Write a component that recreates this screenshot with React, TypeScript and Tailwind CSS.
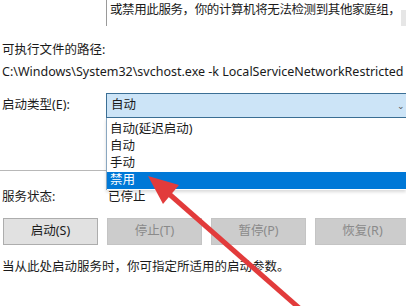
const FONT = "font-['Segoe_UI','Noto_Sans','Noto_Sans_CJK_SC',sans-serif]";

const OPTIONS = ['自动(延迟启动)', '自动', '手动', '禁用'];

function ActionButton({ label, disabled }: { label: string; disabled?: boolean }) {
  return (
    <div
      className={`w-[95px] h-[27px] shrink-0 flex items-center justify-center border text-[12.5px] ${
        disabled ? 'bg-[#cccccc] border-[#c4c4c4] text-[#8a8a8a]' : 'bg-[#e1e1e1] border-[#adadad] text-[#1a1a1a]'
      }`}
    >
      {label}
    </div>
  );
}

export default function App() {
  return (
    <div className={`relative w-[406px] h-[306px] overflow-hidden bg-white text-[#1a1a1a] ${FONT}`}>
      {/* 설명 텍스트 박스 */}
      <div className="flex h-[26px]">
        <div className="w-[106px] shrink-0" />
        <div className="flex-1 min-w-0 flex border-l border-[#9a9a9a]">
          <div className="flex-1 min-w-0 pl-[3px] pt-[1px] text-[12.5px] leading-[17px] tracking-[-0.4px] whitespace-nowrap">
            或禁用此服务，你的计算机将无法检测到其他家庭组，
          </div>
          <div className="w-[5px] mt-[10px] h-[16px] bg-[#e6e6e6]" />
        </div>
      </div>

      <div className="mt-[15px] h-[18px] pl-[2px] text-[12.5px] leading-[18px]">可执行文件的路径:</div>
      <div className="mt-[4px] h-[18px] pl-[2px] text-[12.5px] leading-[18px] whitespace-nowrap">
        C:\Windows\System32\svchost.exe -k LocalServiceNetworkRestricted
      </div>

      {/* 시작 유형 */}
      <div className="mt-[12px] flex h-[25px]">
        <div className="w-[106px] shrink-0 pl-[2px] flex items-center text-[12.5px]">启动类型(E):</div>
        <div className="flex-1 flex items-center justify-between bg-[#cce4f7] border border-[#3b6f95] border-r-0 pl-[4px] text-[12.5px]">
          <span>自动</span>
          <span className="text-[9px] text-[#555] pr-[1px]">⌄</span>
        </div>
      </div>

      {/* 구분선 */}
      <div className="mt-[52px] h-px w-[106px] bg-[#b8b8b8]" />

      <div className="mt-[17px] flex h-[18px] items-center text-[12.5px]">
        <div className="w-[106px] shrink-0 pl-[2px]">服务状态:</div>
        <div className="pl-[2px]">已停止</div>
      </div>

      <div className="mt-[12px] flex gap-[9px] pl-[3px]">
        <ActionButton label="启动(S)" />
        <ActionButton label="停止(T)" disabled />
        <ActionButton label="暂停(P)" disabled />
        <ActionButton label="恢复(R)" disabled />
      </div>

      <div className="mt-[13px] pl-[2px] text-[12.5px] leading-[18px]">当从此处启动服务时，你可指定所适用的启动参数。</div>

      {/* 드롭다운 목록 */}
      <div className="absolute left-[106px] top-[118px] w-[300px] bg-white border-l border-[#8aa7c0] pt-[3px] pb-[1px] shadow-[0_2px_3px_rgba(0,0,0,0.15)]">
        {OPTIONS.map((opt, i) => (
          <div
            key={opt}
            className={`h-[17px] pl-[3px] flex items-center text-[12.5px] ${
              i === 3 ? 'bg-[#0078d7] text-white' : 'text-[#1a1a1a]'
            }`}
          >
            {opt}
          </div>
        ))}
      </div>

      {/* 빨간 화살표 */}
      <svg className="absolute left-0 top-0" width="406" height="306" viewBox="0 0 406 306">
        <line x1="168" y1="193" x2="306" y2="314" stroke="#e23b3b" strokeWidth="5" />
        <polygon points="148,176 179,185 163,204" fill="#e23b3b" />
      </svg>
    </div>
  );
}
